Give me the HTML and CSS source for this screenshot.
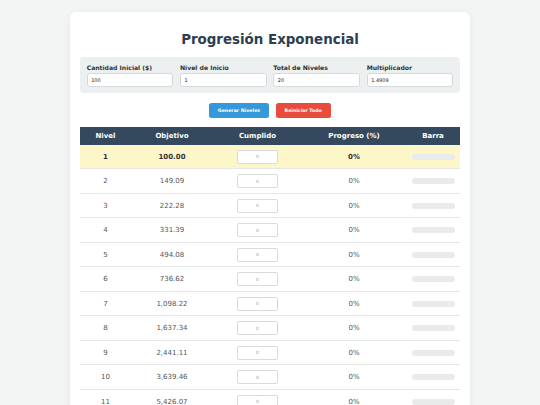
FILE: index.html
```html
<!DOCTYPE html>
<html lang="es">
<head>
<meta charset="utf-8">
<title>Progresión Exponencial</title>
<link rel="stylesheet" href="styles.css">
</head>
<body>
<div class="card">
  <h1 class="title">Progresión Exponencial</h1>
  <div class="controls">
    <div class="field"><label>Cantidad Inicial ($)</label><input type="text" value="100"></div>
    <div class="field"><label>Nivel de Inicio</label><input type="text" value="1"></div>
    <div class="field"><label>Total de Niveles</label><input type="text" value="20"></div>
    <div class="field"><label>Multiplicador</label><input type="text" value="1.4909"></div>
  </div>
  <div class="actions">
    <button class="btn btn-blue">Generar Niveles</button>
    <button class="btn btn-red">Reiniciar Todo</button>
  </div>
  <table class="levels">
    <colgroup>
      <col class="c1"><col class="c2"><col class="c3"><col class="c4"><col class="c5">
    </colgroup>
    <thead>
      <tr><th>Nivel</th><th>Objetivo</th><th>Cumplido</th><th>Progreso (%)</th><th>Barra</th></tr>
    </thead>
    <tbody>
      <tr class="current"><td>1</td><td>100.00</td><td><input class="done" type="text" placeholder="0"></td><td>0%</td><td><div class="bar"></div></td></tr>
      <tr><td>2</td><td>149.09</td><td><input class="done" type="text" placeholder="0"></td><td>0%</td><td><div class="bar"></div></td></tr>
      <tr><td>3</td><td>222.28</td><td><input class="done" type="text" placeholder="0"></td><td>0%</td><td><div class="bar"></div></td></tr>
      <tr><td>4</td><td>331.39</td><td><input class="done" type="text" placeholder="0"></td><td>0%</td><td><div class="bar"></div></td></tr>
      <tr><td>5</td><td>494.08</td><td><input class="done" type="text" placeholder="0"></td><td>0%</td><td><div class="bar"></div></td></tr>
      <tr><td>6</td><td>736.62</td><td><input class="done" type="text" placeholder="0"></td><td>0%</td><td><div class="bar"></div></td></tr>
      <tr><td>7</td><td>1,098.22</td><td><input class="done" type="text" placeholder="0"></td><td>0%</td><td><div class="bar"></div></td></tr>
      <tr><td>8</td><td>1,637.34</td><td><input class="done" type="text" placeholder="0"></td><td>0%</td><td><div class="bar"></div></td></tr>
      <tr><td>9</td><td>2,441.11</td><td><input class="done" type="text" placeholder="0"></td><td>0%</td><td><div class="bar"></div></td></tr>
      <tr><td>10</td><td>3,639.46</td><td><input class="done" type="text" placeholder="0"></td><td>0%</td><td><div class="bar"></div></td></tr>
      <tr><td>11</td><td>5,426.07</td><td><input class="done" type="text" placeholder="0"></td><td>0%</td><td><div class="bar"></div></td></tr>
      <tr><td>12</td><td>8,089.73</td><td><input class="done" type="text" placeholder="0"></td><td>0%</td><td><div class="bar"></div></td></tr>
      <tr><td>13</td><td>12,060.98</td><td><input class="done" type="text" placeholder="0"></td><td>0%</td><td><div class="bar"></div></td></tr>
      <tr><td>14</td><td>17,981.71</td><td><input class="done" type="text" placeholder="0"></td><td>0%</td><td><div class="bar"></div></td></tr>
      <tr><td>15</td><td>26,808.93</td><td><input class="done" type="text" placeholder="0"></td><td>0%</td><td><div class="bar"></div></td></tr>
      <tr><td>16</td><td>39,969.43</td><td><input class="done" type="text" placeholder="0"></td><td>0%</td><td><div class="bar"></div></td></tr>
      <tr><td>17</td><td>59,590.42</td><td><input class="done" type="text" placeholder="0"></td><td>0%</td><td><div class="bar"></div></td></tr>
      <tr><td>18</td><td>88,843.36</td><td><input class="done" type="text" placeholder="0"></td><td>0%</td><td><div class="bar"></div></td></tr>
      <tr><td>19</td><td>132,456.57</td><td><input class="done" type="text" placeholder="0"></td><td>0%</td><td><div class="bar"></div></td></tr>
      <tr><td>20</td><td>197,479.50</td><td><input class="done" type="text" placeholder="0"></td><td>0%</td><td><div class="bar"></div></td></tr>
    </tbody>
  </table>
</div>
</body>
</html>
```
FILE: styles.css
```css
html, body {
  margin: 0;
  padding: 0;
}
body {
  background: #f3f4f4;
  font-family: "DejaVu Sans", Verdana, sans-serif;
  color: #333;
}
.card {
  width: 380px;
  margin: 12px auto 0;
  padding: 20px 10px 20px;
  background: #ffffff;
  border-radius: 6px;
  box-shadow: 0 1px 6px rgba(0, 0, 0, 0.06);
}
.title {
  margin: 0 0 9px;
  font-size: 13.4px;
  line-height: 16px;
  font-weight: bold;
  text-align: center;
  color: #2c3e50;
}
.controls {
  display: grid;
  grid-template-columns: repeat(4, 1fr);
  gap: 6.7px;
  padding: 6.7px 6.7px 6px;
  background: #ecf0f1;
  border-radius: 4px;
}
.field {
  display: flex;
  flex-direction: column;
}
.field label {
  font-size: 6.1px;
  line-height: 7.5px;
  font-weight: bold;
  color: #333;
  margin-bottom: 1.5px;
}
.field input {
  box-sizing: border-box;
  width: 100%;
  height: 14px;
  margin: 0;
  padding: 0 3.5px;
  border: 1px solid #d5d9da;
  border-radius: 2.5px;
  background: #fff;
  font-family: "DejaVu Sans", sans-serif;
  font-size: 5px;
  color: #222;
}
.actions {
  display: flex;
  justify-content: center;
  gap: 7px;
  margin: 10.6px 0 8.4px;
}
.btn {
  height: 15px;
  margin: 0;
  border: none;
  border-radius: 2.5px;
  font-family: "DejaVu Sans", sans-serif;
  font-size: 4.7px;
  font-weight: bold;
  color: #fff;
}
.btn-blue {
  width: 59.3px;
  background: #3498db;
}
.btn-red {
  width: 55px;
  background: #e74c3c;
}
.levels {
  width: 380px;
  border-collapse: collapse;
  table-layout: fixed;
}
.c1 { width: 51px; }
.c2 { width: 82px; }
.c3 { width: 89px; }
.c4 { width: 104px; }
.c5 { width: 54px; }
.levels th {
  height: 18.3px;
  padding: 0;
  background: #34495e;
  color: #fff;
  font-size: 7px;
  font-weight: bold;
  text-align: center;
}
.levels td {
  height: 23.5px;
  padding: 0;
  border-bottom: 1px solid #e6e8e8;
  text-align: center;
  font-size: 7px;
  color: #555;
}
.levels tr.current td {
  background: #fdf6c9;
  font-weight: bold;
  color: #333;
}
.done {
  box-sizing: border-box;
  display: block;
  width: 41.7px;
  height: 13.7px;
  margin: 0 auto;
  padding: 0;
  border: 1px solid #d8dbdc;
  border-radius: 2px;
  background: #fff;
  font-family: "DejaVu Sans", sans-serif;
  font-size: 4.5px;
  text-align: center;
}
.done::placeholder {
  color: #a0a0a0;
}
.bar {
  width: 43px;
  height: 6px;
  margin: 0 auto;
  border-radius: 3px;
  background: #e9eaea;
}
```
